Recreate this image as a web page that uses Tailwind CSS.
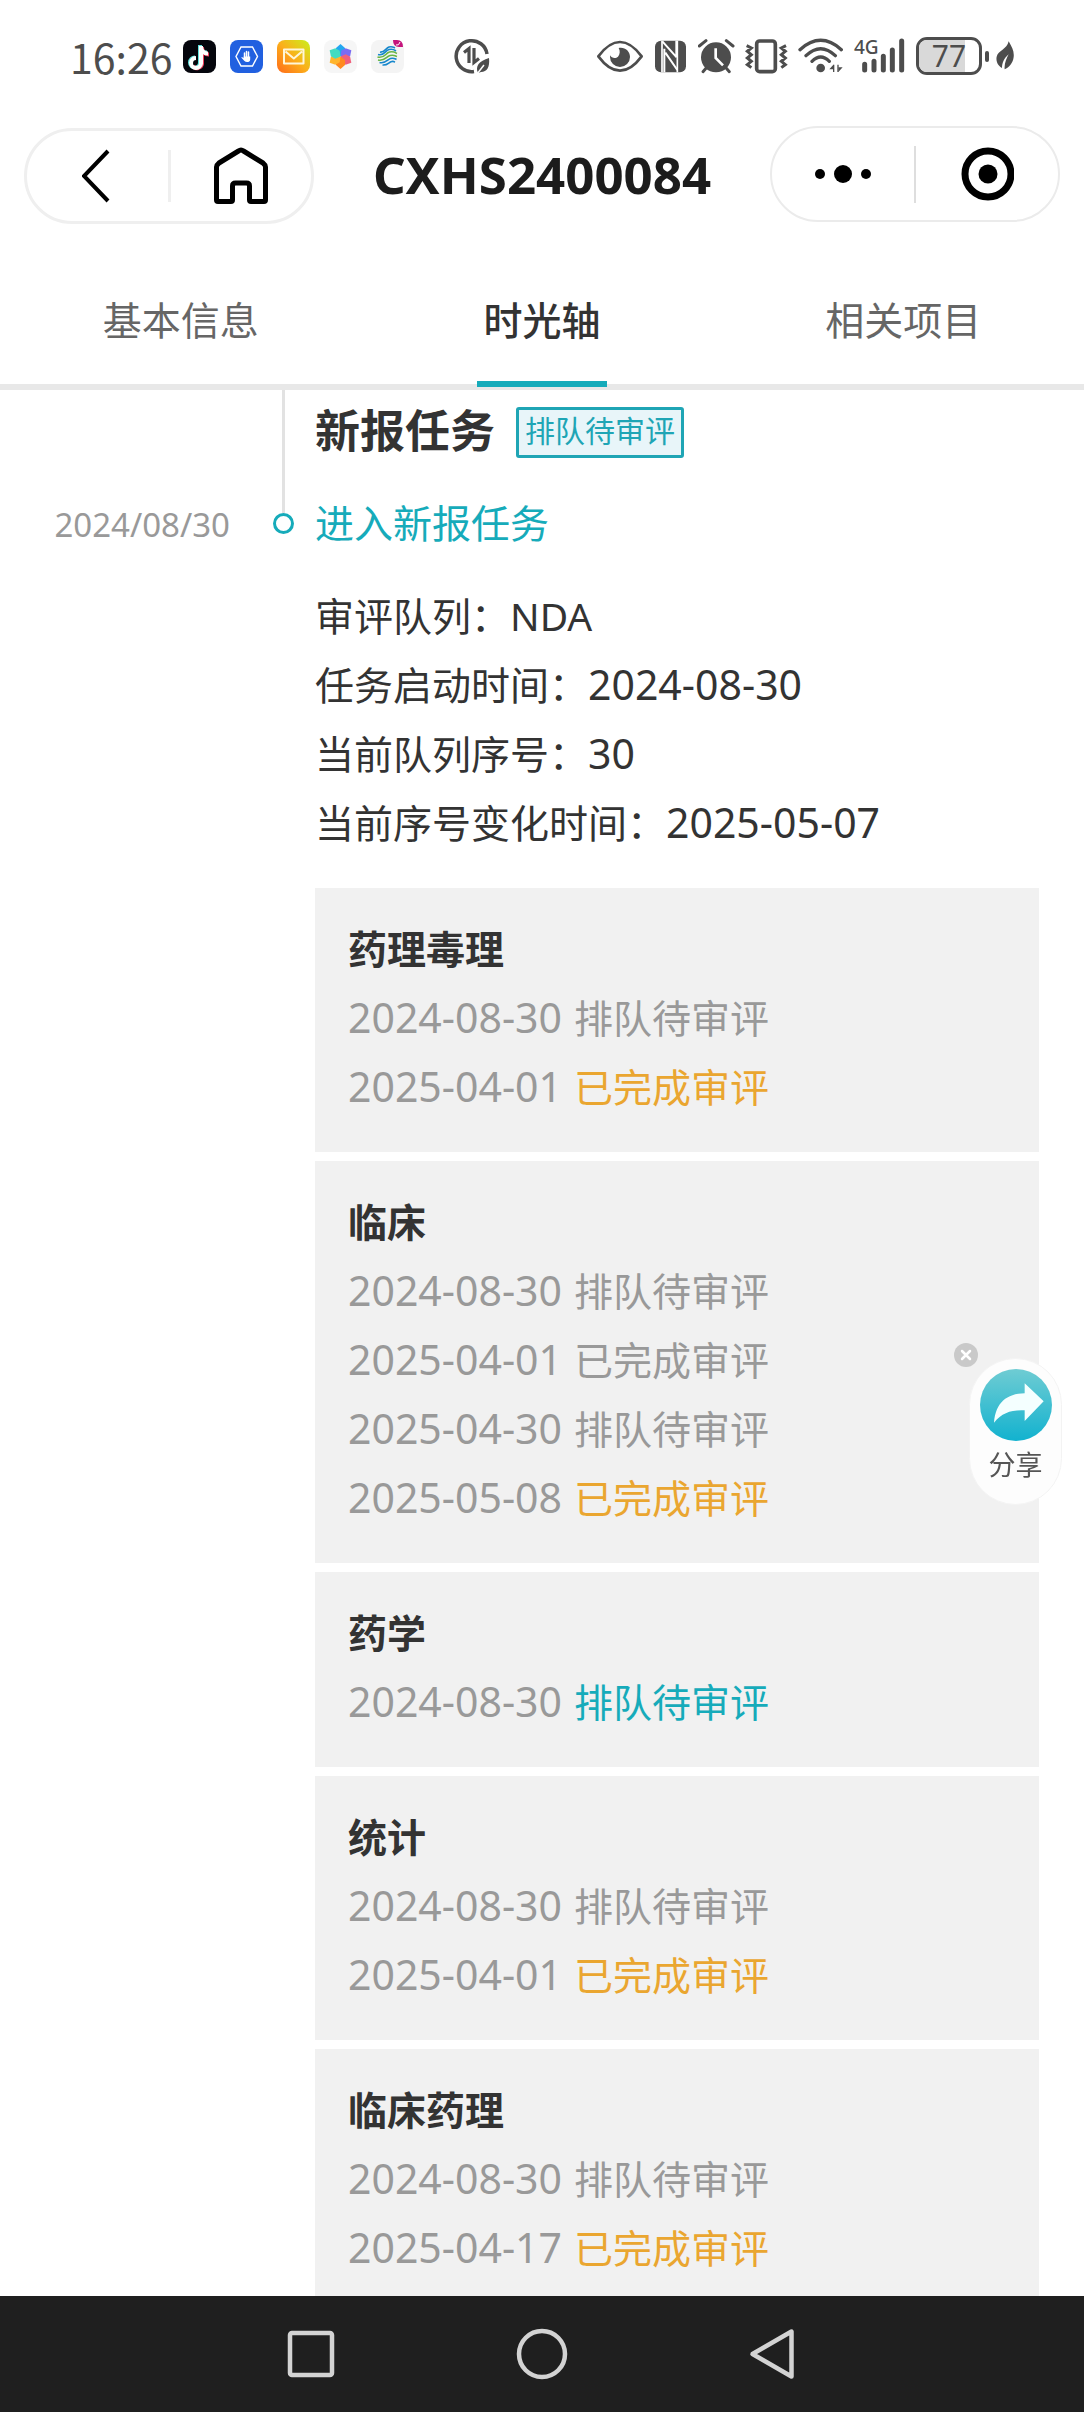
<!DOCTYPE html>
<html lang="zh-CN">
<head>
<meta charset="utf-8">
<meta name="viewport" content="width=device-width, initial-scale=1">
<title>CXHS2400084</title>
<script src="https://cdn.jsdelivr.net/npm/@tailwindcss/browser@4"></script>
</head>
<body class="min-h-screen bg-white font-['Noto_Sans','Noto_Sans_CJK_SC',sans-serif] text-[#333]">

<!-- System status bar -->
<div class="flex h-[112px] items-center pl-[70px] pr-[70px] text-[#4d4d4d]">
  <span class="w-[113px] text-[41px] font-['Noto_Sans_CJK_SC',sans-serif] leading-[60px]">16:26</span>
  <div class="flex items-center gap-[14px]">
    <svg class="size-[33px]" viewBox="0 0 33 33" aria-hidden="true">
      <rect width="33" height="33" rx="8" fill="#05060d"/>
      <g fill="none" stroke-width="4">
        <path d="M17 5v17.500a5 5 0 1 1-5-5M17 6c.5 4 3 6.500 7 6.500" stroke="#5fe0dc"/>
        <path d="M19 7v17a5 5 0 0 1-9 2M19 8c.5 4 3 6.500 7 6.500" stroke="#f0405c"/>
        <path d="M18 6v17.500a5 5 0 1 1-5-5.500M18 7c.5 4 3 6.500 7 6.500" stroke="#fff"/>
      </g>
    </svg>
    <svg class="size-[33px]" viewBox="0 0 33 33" aria-hidden="true">
      <rect width="33" height="33" rx="8" fill="#2160e0"/>
      <path d="M11 7h11.500l5 9.500-5 9.500H11l-5-9.500z" fill="none" stroke="#fff" stroke-width="1.400"/>
      <path d="M14.500 13v5M16.500 11.500v6M18.500 12v6" stroke="#fff" stroke-width="1.500" stroke-linecap="round"/>
      <path d="M13.700 16.500h6.500v3c0 2-1.500 2.500-3 2.500-2.500 0-3.500-2-6-4.500 1-.8 1.800 0 2.500.8z" fill="#fff"/>
    </svg>
    <svg class="size-[33px]" viewBox="0 0 33 33" aria-hidden="true">
      <defs><linearGradient id="mail" x1="0" y1="1" x2="1" y2="0"><stop offset="0" stop-color="#ff6a1a"/><stop offset=".5" stop-color="#fbb01a"/><stop offset="1" stop-color="#c9f01c"/></linearGradient></defs>
      <rect width="33" height="33" rx="8" fill="url(#mail)"/>
      <path d="M7 9.500h19.500v14H7zM8.500 11.500l8.300 7 8.200-7" fill="none" stroke="#fff6d8" stroke-width="2" stroke-linejoin="round"/>
    </svg>
    <svg class="size-[33px]" viewBox="0 0 33 33" aria-hidden="true">
      <rect width="33" height="33" rx="8" fill="#f6f6f6"/>
      <g transform="translate(16.500 16.500)">
        <path d="M0-12.500l4.500 4V-3.500L0 0l-4.500-3.500V-8.500z" fill="#22a7f0"/>
        <path d="M0-12.500l4.500 4V-3.500L0 0l-4.500-3.500V-8.500z" fill="#7a6cf2" transform="rotate(60)"/>
        <path d="M0-12.500l4.500 4V-3.500L0 0l-4.500-3.500V-8.500z" fill="#f0607c" transform="rotate(120)"/>
        <path d="M0-12.500l4.500 4V-3.500L0 0l-4.500-3.500V-8.500z" fill="#ff8a1f" transform="rotate(180)"/>
        <path d="M0-12.500l4.500 4V-3.500L0 0l-4.500-3.500V-8.500z" fill="#ffb52e" transform="rotate(240)"/>
        <path d="M0-12.500l4.500 4V-3.500L0 0l-4.500-3.500V-8.500z" fill="#43dcc0" transform="rotate(300)"/>
      </g>
    </svg>
    <svg class="size-[33px]" viewBox="0 0 33 33" aria-hidden="true">
      <rect width="33" height="33" rx="8" fill="#f4f4f4"/>
      <g fill="none" stroke-width="1.600">
        <path d="M9 12c4 1 6-4 9-5s4 0 6 1M7 14.500c6 2 7-4 11-5s5 0 7 1.500" stroke="#1687cc"/>
        <path d="M6.500 17c7 2 8-4 12-5s5 0 7.500 1.500M7 20c7 1.500 8-3.500 12-4.500s4 0 7 1" stroke="#69b545"/>
        <path d="M8.500 22.500c6 1.500 8-3 11-4s4 0 6 1M11.500 25c5 .5 6-2.500 8.500-3.300s3 0 4 .5" stroke="#1687cc"/>
      </g>
      <path d="M22 0h4q6 0 6 7h-4q-6 0-6-7z" fill="#c4147c"/><path d="M25 5q3 1 4-3" fill="none" stroke="#fff"/>
    </svg>
  </div>
  <svg class="ml-[50px] h-[36px] w-[36px]" viewBox="0 0 36 36" aria-hidden="true">
    <path d="M20 33.500A15.500 15.500 0 1 1 33 16" fill="none" stroke="currentColor" stroke-width="3.500"/>
    <path d="M10 14.500l5-4V25M20 10v14.500l5-4" fill="none" stroke="currentColor" stroke-width="3.200"/>
    <path d="M35 20c1 9-2 14-8 14l-3 1c-3-7 1-12 11-15z" fill="currentColor"/><path d="M23 36l7-9" stroke="#fff" stroke-width="1.500"/>
  </svg>
  <div class="ml-auto flex items-center">
    <svg class="h-[40px] w-[46px]" viewBox="48 48 138 120" fill="none" stroke="currentColor" aria-hidden="true">
      <path d="M52 109Q84 66 117 66T182 109Q150 152 117 152T52 109z" stroke-width="8" stroke-linejoin="round"/>
      <path d="M113 84c17-4 34 8 34 27a30 30 0 0 1-60 0v-5c5 9 17 11 24 4 6-7 7-17 2-26z" fill="currentColor" stroke="none"/>
    </svg>
    <svg class="ml-[11px] h-[40px] w-[33px]" viewBox="219 48 99 120" aria-hidden="true">
      <rect x="222" y="62" width="93" height="95" rx="18" fill="currentColor"/>
      <path d="M243 62v95M289 62v95" stroke="#fff" stroke-width="5"/>
      <path d="M244 64l43 48M250 86v71M253 98l36 52M286 62v48" stroke="#fff" stroke-width="6" fill="none"/>
    </svg>
    <svg class="ml-[11px] h-[40px] w-[37px]" viewBox="351 48 111 120" fill="none" stroke="currentColor" aria-hidden="true">
      <circle cx="405" cy="112" r="45" fill="currentColor" stroke="none"/>
      <path d="M355 78l20-16M436 62l20 16" stroke-width="9" stroke-linecap="round"/><path d="M375 145l-9 10M436 145l9 10" stroke-width="9" stroke-linecap="round"/>
      <path d="M404 85v29l22 22" stroke="#fff" stroke-width="8"/>
    </svg>
    <svg class="ml-[9px] h-[40px] w-[44px]" viewBox="492 48 132 120" fill="none" stroke="currentColor" aria-hidden="true">
      <rect x="530" y="63" width="56" height="92" rx="9" stroke-width="11"/>
      <path d="M500 77l14 7-12 10 12 10-12 10 12 10-12 10 12 9M618 77l-14 7 12 10-12 10 12 10-12 10 12 10-12 9" stroke-width="9"/>
    </svg>
    <svg class="ml-[10px] h-[40px] w-[46px]" viewBox="655 48 138 120" fill="none" stroke="currentColor" aria-hidden="true">
      <path d="M661 89q62-56 124 0M679 107q44-42 88 0M697 124q26-26 52 0" stroke-width="10" stroke-linecap="round"/>
      <circle cx="723" cy="144" r="13" fill="currentColor" stroke="none"/>
      <path d="M762 134v22M775 134v22" stroke-width="4"/><path d="M761 134v14h-12zM776 156v-14h13z" fill="currentColor" stroke="none"/>
    </svg>
    <div class="relative ml-[10px] h-[40px] w-[52px]">
      <svg class="h-[40px] w-[52px]" viewBox="823 48 156 120" fill="none" stroke="currentColor" stroke-width="15" stroke-linecap="round" aria-hidden="true">
        <path d="M855 133v17M883 124v26M911 109v41M938 90v60M966 63v87"/>
      </svg>
      <span class="absolute top-0 left-0 text-[19px] leading-[22px] font-medium">4G</span>
    </div>
    <div class="relative ml-[10px] flex h-[38px] w-[66px] items-center justify-center rounded-[11px] border-3 border-[#4d4d4d]">
      <div class="absolute inset-y-0 left-0 w-[77%] rounded-l-[8px] bg-[#d9d9d9]"></div>
      <span class="relative text-[30px] leading-[32px]">77</span>
    </div>
    <div class="ml-[3px] h-[11px] w-[4px] rounded-full bg-[#4d4d4d]"></div>
    <svg class="ml-[7px] h-[34px] w-[18px]" viewBox="1248 57 54 102" aria-hidden="true">
      <path d="M1286 64c10 18 17 30 15 47-2 18-14 32-27 37-2-17 6-34 12-45-15 13-20 27-20 41-12-6-19-20-16-34 4-19 31-21 36-46z" fill="currentColor"/>
    </svg>
  </div>
</div>

<!-- Mini-program header -->
<header class="grid grid-cols-[290px_1fr_290px] items-center px-6 pt-[12px]">
  <div class="mt-[4px] flex h-[96px] items-center rounded-full border-[3px] border-[#efefef]">
    <button type="button" aria-label="返回" class="flex flex-1 justify-center">
      <svg class="h-[54px] w-[30px]" viewBox="0 0 30 54" fill="none" stroke="#000" stroke-width="4"><path d="M26 2L2 27l24 25"/></svg>
    </button>
    <span class="h-[52px] w-[3px] bg-[#efefef]"></span>
    <button type="button" aria-label="首页" class="flex flex-1 justify-center">
      <svg class="h-[58px] w-[56px]" viewBox="0 0 56 58" fill="none" stroke="#000" stroke-width="5" stroke-linejoin="round"><path d="M3.500 20Q3.500 18 6 16L25.500 4Q28 2 30.500 4L50 16Q52.500 18 52.500 20V53q0 1.500-1.500 1.500H38q-1.500 0-1.500-1.500V39q0-3-3-3h-11q-3 0-3 3v14q0 1.500-1.500 1.500H5Q3.500 54.500 3.500 53z"/></svg>
    </button>
  </div>
  <h1 class="text-center text-[51px] leading-[64px] font-bold whitespace-nowrap text-[#1c1c1c]">CXHS2400084</h1>
  <div class="flex h-[96px] items-center rounded-full border-2 border-[#ebebeb]">
    <button type="button" aria-label="更多" class="flex flex-1 justify-center">
      <svg class="h-[20px] w-[58px]" viewBox="0 0 58 20"><circle cx="6" cy="10" r="5"/><circle cx="29" cy="10" r="9"/><circle cx="52" cy="10" r="5"/></svg>
    </button>
    <span class="h-[57px] w-[2px] bg-[#dedede]"></span>
    <button type="button" aria-label="关闭" class="flex flex-1 justify-center">
      <svg class="size-[54px]" viewBox="0 0 54 54"><circle cx="28" cy="27" r="23" fill="none" stroke="#000" stroke-width="7"/><circle cx="28" cy="27" r="9.500"/></svg>
    </button>
  </div>
</header>

<!-- Tabs -->
<nav class="mt-[33px] grid h-[133px] grid-cols-3 border-b-6 border-[#e8e8e8] text-[39px]">
  <a href="#info" class="flex items-center justify-center text-[#666]">基本信息</a>
  <a href="#timeline" class="relative flex items-center justify-center font-medium">时光轴<span class="absolute -bottom-[3px] h-[6px] w-[130px] bg-[#16abba]"></span></a>
  <a href="#related" class="flex items-center justify-center text-[#666]">相关项目</a>
</nav>

<!-- Timeline -->
<main id="timeline" class="grid grid-cols-[273px_21px_1fr] pr-[45px] pb-[90px]">
  <time class="mt-[111px] h-[48px] pr-[43px] text-right text-[33px] leading-[48px] text-[#999]">2024/08/30</time>
  <div class="flex flex-col items-center">
    <span class="h-[123px] w-[3px] bg-[#e2e2e2]"></span>
    <span class="size-[21px] rounded-full border-[3px] border-[#16abba]"></span>
  </div>
  <section class="pl-[21px]">
    <div class="flex h-[88px] items-center gap-[21px]">
      <h2 class="pb-[6px] text-[45px] leading-[60px] font-bold">新报任务</h2>
      <span class="mb-[3px] flex h-[51px] items-center rounded-[3px] border-3 border-[#1fa5b5] bg-[#e8f5f9] px-[6px] pb-[3px] text-[30px] leading-[42px] text-[#1fa5b5]">排队待审评</span>
    </div>
    <h3 class="mt-[12px] text-[39px] leading-[66px] text-[#16abba]">进入新报任务</h3>
    <dl class="mt-[25px] text-[39px] leading-[69px]">
      <div class="flex h-[69px]"><dt>审评队列：</dt><dd>NDA</dd></div>
      <div class="flex h-[69px]"><dt>任务启动时间：</dt><dd class="text-[41px]">2024-08-30</dd></div>
      <div class="flex h-[69px]"><dt>当前队列序号：</dt><dd class="text-[41px]">30</dd></div>
      <div class="flex h-[69px]"><dt>当前序号变化时间：</dt><dd class="text-[41px]">2025-05-07</dd></div>
    </dl>
    <div class="mt-[31px] flex flex-col gap-[9px] text-[39px] leading-[69px] text-[#999]">
      <article class="bg-[#f1f1f1] px-[33px] pt-[26px] pb-[31px]">
        <h4 class="font-bold text-[#333]">药理毒理</h4>
        <p class="flex h-[69px] gap-3"><time class="text-[41px]">2024-08-30</time><span>排队待审评</span></p>
        <p class="flex h-[69px] gap-3"><time class="text-[41px]">2025-04-01</time><span class="text-[#eaa630]">已完成审评</span></p>
      </article>
      <article class="bg-[#f1f1f1] px-[33px] pt-[26px] pb-[31px]">
        <h4 class="font-bold text-[#333]">临床</h4>
        <p class="flex h-[69px] gap-3"><time class="text-[41px]">2024-08-30</time><span>排队待审评</span></p>
        <p class="flex h-[69px] gap-3"><time class="text-[41px]">2025-04-01</time><span>已完成审评</span></p>
        <p class="flex h-[69px] gap-3"><time class="text-[41px]">2025-04-30</time><span>排队待审评</span></p>
        <p class="flex h-[69px] gap-3"><time class="text-[41px]">2025-05-08</time><span class="text-[#eaa630]">已完成审评</span></p>
      </article>
      <article class="bg-[#f1f1f1] px-[33px] pt-[26px] pb-[31px]">
        <h4 class="font-bold text-[#333]">药学</h4>
        <p class="flex h-[69px] gap-3"><time class="text-[41px]">2024-08-30</time><span class="text-[#16abba]">排队待审评</span></p>
      </article>
      <article class="bg-[#f1f1f1] px-[33px] pt-[26px] pb-[31px]">
        <h4 class="font-bold text-[#333]">统计</h4>
        <p class="flex h-[69px] gap-3"><time class="text-[41px]">2024-08-30</time><span>排队待审评</span></p>
        <p class="flex h-[69px] gap-3"><time class="text-[41px]">2025-04-01</time><span class="text-[#eaa630]">已完成审评</span></p>
      </article>
      <article class="bg-[#f1f1f1] px-[33px] pt-[26px] pb-[31px]">
        <h4 class="font-bold text-[#333]">临床药理</h4>
        <p class="flex h-[69px] gap-3"><time class="text-[41px]">2024-08-30</time><span>排队待审评</span></p>
        <p class="flex h-[69px] gap-3"><time class="text-[41px]">2025-04-17</time><span class="text-[#eaa630]">已完成审评</span></p>
      </article>
    </div>
  </section>
</main>

<!-- Floating share control -->
<div class="fixed top-[1358px] right-[22px]">
  <button type="button" class="flex h-[147px] w-[93px] flex-col items-center rounded-full border border-[#f3f3f3] bg-[#fdfdfd] pt-[10px] text-[27px] leading-[36px] text-[#555]">
    <svg class="size-[72px]" viewBox="0 0 216 216" aria-hidden="true">
      <defs><linearGradient id="share" x1="0" y1="0" x2="0" y2="1"><stop offset="0" stop-color="#6fccd3"/><stop offset="1" stop-color="#12b2cf"/></linearGradient></defs>
      <circle cx="108" cy="108" r="108" fill="url(#share)"/>
      <path d="M42 161C47 101 80 74 134 73V43l57 54-57 59v-32C92 122 66 132 42 161z" fill="#f4ffff"/>
    </svg>
    <span class="mt-[6px]">分享</span>
  </button>
  <button type="button" aria-label="关闭分享" class="absolute -top-[15px] -left-[15px]">
    <svg class="size-[24px]" viewBox="0 0 24 24"><circle cx="12" cy="12" r="12" fill="#c9c9c9"/><path d="M8 8l8 8M16 8l-8 8" stroke="#fff" stroke-width="2.500" stroke-linecap="round"/></svg>
  </button>
</div>

<!-- System navigation -->
<nav class="fixed inset-x-0 bottom-0 flex h-[116px] items-center justify-center gap-[179px] bg-[#1f1f1f]">
  <button type="button" aria-label="最近任务"><svg class="size-[52px]" viewBox="0 0 52 52" fill="none" stroke="#d3d3d3" stroke-width="4.500"><rect x="5" y="5" width="42" height="42" rx="2"/></svg></button>
  <button type="button" aria-label="主屏幕"><svg class="size-[52px]" viewBox="0 0 52 52" fill="none" stroke="#d3d3d3" stroke-width="4.500"><circle cx="26" cy="26" r="23"/></svg></button>
  <button type="button" aria-label="返回上一页"><svg class="size-[52px]" viewBox="0 0 52 52" fill="none" stroke="#d3d3d3" stroke-width="4.500" stroke-linejoin="round"><path d="M44.500 3.500v45L5.500 26z"/></svg></button>
</nav>
</body>
</html>
